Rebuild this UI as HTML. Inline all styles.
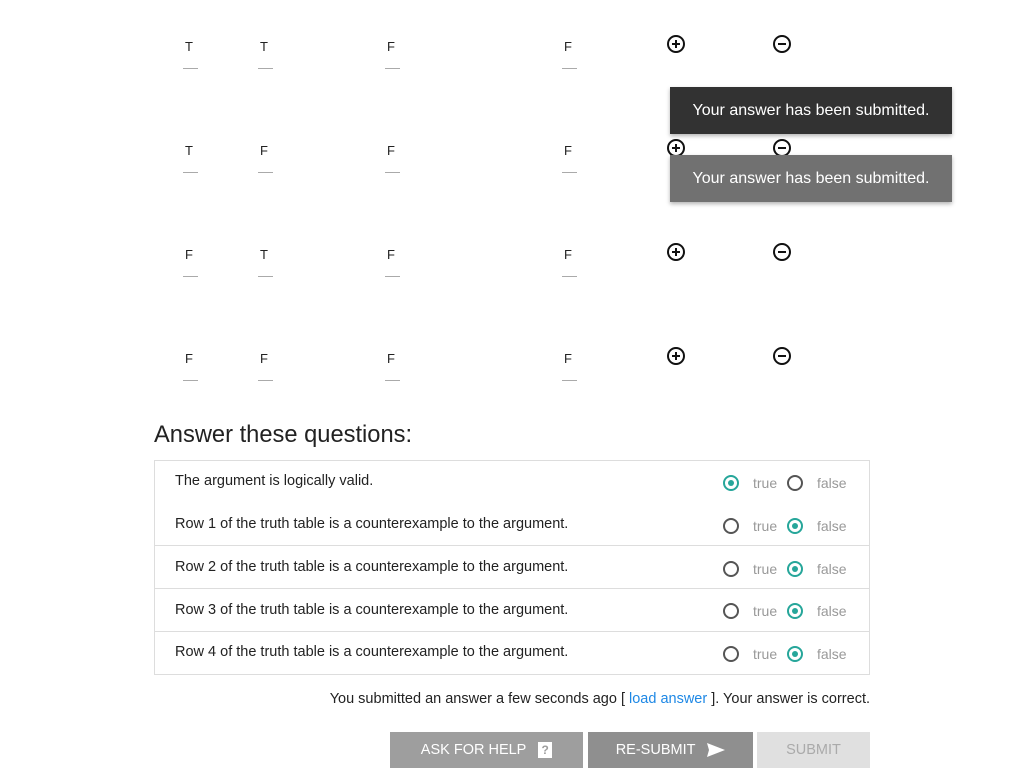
<!DOCTYPE html>
<html><head><style>
body{margin:0;width:1024px;height:768px;overflow:hidden;background:#fff;font-family:"Liberation Sans",sans-serif;color:#222;position:relative}
.a{position:absolute}
.l{font-size:13px;color:#222}
.d{width:15px;height:1px;background:#aaa}
.ic{width:18px;height:18px}
.toast{position:absolute;left:670px;width:282px;height:47px;color:#fff;font-size:16px;line-height:47px;text-align:center;box-shadow:0 2px 4px rgba(0,0,0,.3)}
.box{position:absolute;left:154px;top:460px;width:714px;height:213px;border:1px solid #ddd}
.row{position:absolute;left:20px;font-size:14.5px;color:#222}
.hr{position:absolute;left:0;width:714px;height:1px;background:#ddd}
.r{position:absolute;width:12px;height:12px;border:2px solid #555;border-radius:50%}
.r.on{border-color:#26a69a}
.r.on::after{content:"";position:absolute;left:3px;top:3px;width:6px;height:6px;border-radius:50%;background:#26a69a}
.t{position:absolute;font-size:14px;color:#999}
.btn{position:absolute;top:732px;height:36px;line-height:36px;color:#fff;font-size:14.5px;text-align:center}
</style></head><body>
<div id="g"></div>
<script>
var rows=[["T","T","F","F"],["T","F","F","F"],["F","T","F","F"],["F","F","F","F"]];
var xs=[185,260,387,564],h="";
rows.forEach(function(r,i){var y=39+104*i;
r.forEach(function(c,j){h+='<div class="a l" style="left:'+xs[j]+'px;top:'+y+'px">'+c+'</div><div class="a d" style="left:'+(xs[j]-2)+'px;top:'+(y+29)+'px"></div>';});
h+='<svg class="a ic" style="left:667px;top:'+(y-4)+'px" viewBox="0 0 18 18"><circle cx="9" cy="9" r="8" fill="none" stroke="#111" stroke-width="2"/><path d="M9 5v8M5 9h8" stroke="#111" stroke-width="2"/></svg>';
h+='<svg class="a ic" style="left:773px;top:'+(y-4)+'px" viewBox="0 0 18 18"><circle cx="9" cy="9" r="8" fill="none" stroke="#111" stroke-width="2"/><path d="M5 9h8" stroke="#111" stroke-width="2"/></svg>';});
document.getElementById("g").innerHTML=h;
</script>
<div class="toast" style="top:87px;background:#323232">Your answer has been submitted.</div>
<div class="toast" style="top:155px;background:#717171">Your answer has been submitted.</div>
<div class="a" style="left:154px;top:422px;font-size:23.7px;color:#222">Answer these questions:</div>
<div class="box">
<div class="row" style="top:12px">The argument is logically valid.</div>
<div class="row" style="top:55px">Row 1 of the truth table is a counterexample to the argument.</div>
<div class="hr" style="top:84px"></div>
<div class="row" style="top:98px">Row 2 of the truth table is a counterexample to the argument.</div>
<div class="hr" style="top:127px"></div>
<div class="row" style="top:141px">Row 3 of the truth table is a counterexample to the argument.</div>
<div class="hr" style="top:170px"></div>
<div class="row" style="top:183px">Row 4 of the truth table is a counterexample to the argument.</div>
<div class="r on" style="left:568px;top:14px"></div><div class="t" style="left:598px;top:14px">true</div>
<div class="r" style="left:632px;top:14px"></div><div class="t" style="left:662px;top:14px">false</div>
<div class="r" style="left:568px;top:57px"></div><div class="t" style="left:598px;top:57px">true</div>
<div class="r on" style="left:632px;top:57px"></div><div class="t" style="left:662px;top:57px">false</div>
<div class="r" style="left:568px;top:100px"></div><div class="t" style="left:598px;top:100px">true</div>
<div class="r on" style="left:632px;top:100px"></div><div class="t" style="left:662px;top:100px">false</div>
<div class="r" style="left:568px;top:142px"></div><div class="t" style="left:598px;top:142px">true</div>
<div class="r on" style="left:632px;top:142px"></div><div class="t" style="left:662px;top:142px">false</div>
<div class="r" style="left:568px;top:185px"></div><div class="t" style="left:598px;top:185px">true</div>
<div class="r on" style="left:632px;top:185px"></div><div class="t" style="left:662px;top:185px">false</div>
</div>
<div class="a" style="right:154px;top:691px;font-size:14.5px;color:#222">You submitted an answer a few seconds ago [ <span style="color:#1e88e5">load answer</span> ]. Your answer is correct.</div>
<div class="btn" style="left:390px;width:193px;background:#9e9e9e">ASK FOR HELP &nbsp;&nbsp;<span style="display:inline-block;width:14px;height:16px;background:#fff;color:#9e9e9e;font-size:12px;line-height:16px;vertical-align:middle;font-weight:bold">?</span></div>
<div class="btn" style="left:588px;width:165px;background:#8f8f8f">RE-SUBMIT &nbsp;&nbsp;<svg width="18" height="14" viewBox="0 0 18 14" style="vertical-align:middle"><path d="M0 0L18 7L0 14L2 7Z" fill="#fff"/></svg></div>
<div class="btn" style="left:757px;width:113px;background:#e0e0e0;color:#aaa">SUBMIT</div>
</body></html>
